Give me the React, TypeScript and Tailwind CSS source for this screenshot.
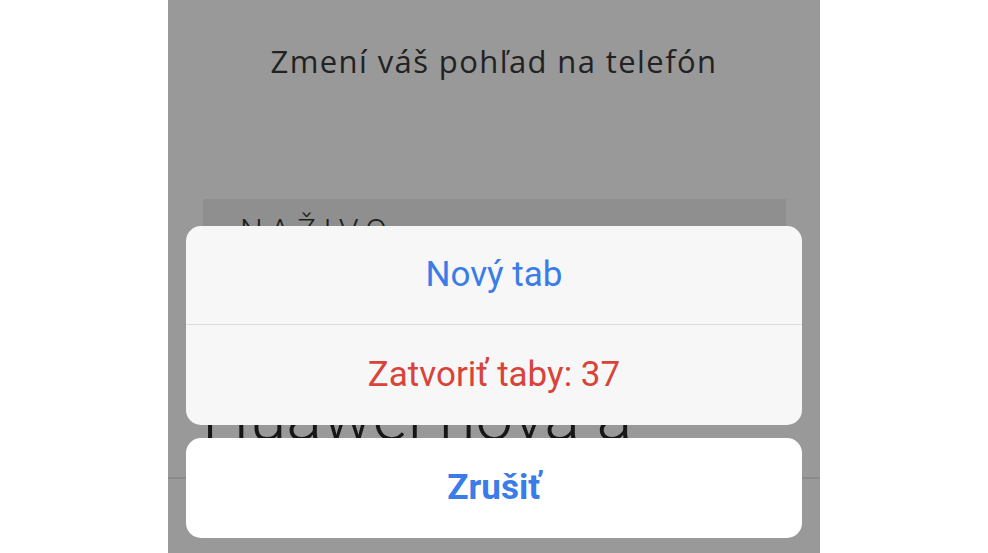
import React from "react";

export default function App() {
  return (
    <div className="w-[988px] h-[553px] bg-white flex justify-center overflow-hidden">
      <div className="relative w-[652px] h-[553px] bg-[#999999] overflow-hidden">
        <div className="pt-[41px] text-center text-[31px] leading-[40px] tracking-[1.4px] text-[#222222]" style={{ fontFamily: "'Open Sans', 'Noto Sans', sans-serif" }}>
          Zmení váš pohľad na telefón
        </div>
        <div className="mt-[118px] ml-[35px] mr-[34px] h-[179px] bg-[#8f8f8f] pt-[13px] pl-[37px]">
          <div className="text-[32px] leading-[36px] tracking-[7px] text-[#1e1e1e] font-light" style={{ fontFamily: "Roboto, 'Liberation Sans', sans-serif" }}>
            NAŽIVO
          </div>
        </div>
        <div className="mt-[4px] pl-[34px] text-[67px] leading-[70px] text-[#161616] font-light" style={{ fontFamily: "Roboto, 'Liberation Sans', sans-serif" }}>
          Huawei nova a
        </div>
        <div className="mt-[25px] h-[2px] bg-[#8a8a8a]" />

        <div className="absolute left-[18px] right-[18px] top-[226px] rounded-[15px] bg-[#f7f7f7] overflow-hidden" style={{ fontFamily: "Roboto, 'Liberation Sans', sans-serif" }}>
          <div className="h-[98px] flex items-center justify-center text-[35px] text-[#3a7ce8]">
            Nový tab
          </div>
          <div className="h-px bg-[#dcdcdc]" />
          <div className="h-[100px] flex items-center justify-center text-[35px] text-[#d8433a]">
            Zatvoriť taby: 37
          </div>
        </div>
        <div className="absolute left-[18px] right-[18px] top-[438px] h-[100px] rounded-[15px] bg-white flex items-center justify-center text-[35px] font-bold text-[#3a7ce8]" style={{ fontFamily: "Roboto, 'Liberation Sans', sans-serif" }}>
          Zrušiť
        </div>
      </div>
    </div>
  );
}
